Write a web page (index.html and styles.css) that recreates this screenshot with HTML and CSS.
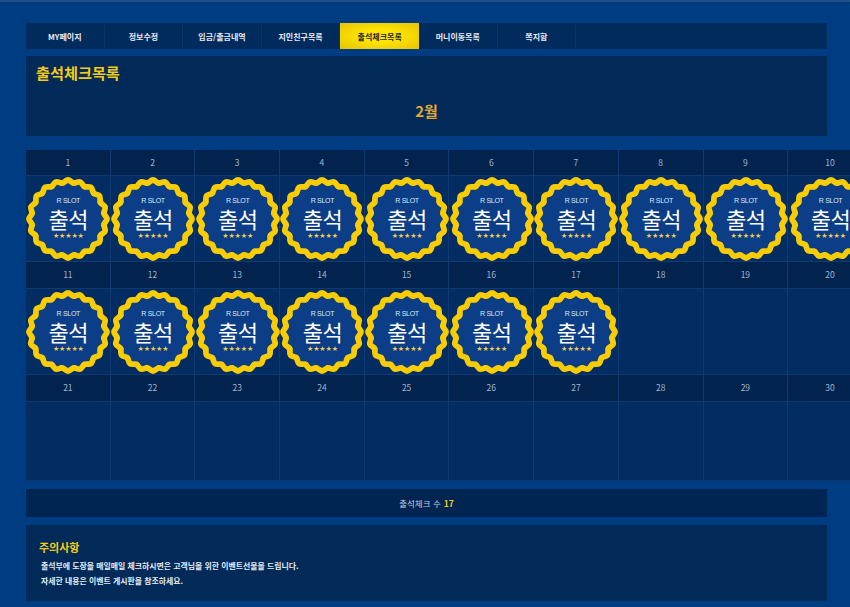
FILE: index.html
```html
<!DOCTYPE html>
<html lang="ko">
<head>
<meta charset="utf-8">
<title>출석체크목록</title>
<link rel="stylesheet" href="styles.css">
</head>
<body>
<svg class="defs" width="0" height="0" aria-hidden="true">
  <defs>
    <path id="lobe" d="M-5.7 -36C-3.4 -36.4 -2.2 -39 0 -39S3.4 -36.4 5.7 -36"/>
    <symbol id="seal" viewBox="-42 -42 84 84">
      <circle r="37" class="seal-fill"/>
      <g class="seal-line">
        <use href="#lobe"/>
        <use href="#lobe" transform="rotate(18)"/>
        <use href="#lobe" transform="rotate(36)"/>
        <use href="#lobe" transform="rotate(54)"/>
        <use href="#lobe" transform="rotate(72)"/>
        <use href="#lobe" transform="rotate(90)"/>
        <use href="#lobe" transform="rotate(108)"/>
        <use href="#lobe" transform="rotate(126)"/>
        <use href="#lobe" transform="rotate(144)"/>
        <use href="#lobe" transform="rotate(162)"/>
        <use href="#lobe" transform="rotate(180)"/>
        <use href="#lobe" transform="rotate(198)"/>
        <use href="#lobe" transform="rotate(216)"/>
        <use href="#lobe" transform="rotate(234)"/>
        <use href="#lobe" transform="rotate(252)"/>
        <use href="#lobe" transform="rotate(270)"/>
        <use href="#lobe" transform="rotate(288)"/>
        <use href="#lobe" transform="rotate(306)"/>
        <use href="#lobe" transform="rotate(324)"/>
        <use href="#lobe" transform="rotate(342)"/>
      </g>
    </symbol>
  </defs>
</svg>
<main class="page">
  <nav class="tabs">
    <a class="tab">MY페이지</a>
    <a class="tab">정보수정</a>
    <a class="tab">입금/출금내역</a>
    <a class="tab">지인친구목록</a>
    <a class="tab tab-active">출석체크목록</a>
    <a class="tab">머니이동목록</a>
    <a class="tab">쪽지함</a>
  </nav>
  <section class="panel">
    <h1 class="panel-title">출석체크목록</h1>
    <p class="month">2월</p>
  </section>
  <section class="calendar">
    <div class="day">1</div><div class="day">2</div><div class="day">3</div><div class="day">4</div><div class="day">5</div><div class="day">6</div><div class="day">7</div><div class="day">8</div><div class="day">9</div><div class="day">10</div>
    <div class="cell"><div class="stamp"><svg class="seal"><use href="#seal"/></svg><div class="stamp-text"><span class="brand">R SLOT</span><span class="word">출석</span><span class="stars">★★★★★</span></div></div></div>
    <div class="cell"><div class="stamp"><svg class="seal"><use href="#seal"/></svg><div class="stamp-text"><span class="brand">R SLOT</span><span class="word">출석</span><span class="stars">★★★★★</span></div></div></div>
    <div class="cell"><div class="stamp"><svg class="seal"><use href="#seal"/></svg><div class="stamp-text"><span class="brand">R SLOT</span><span class="word">출석</span><span class="stars">★★★★★</span></div></div></div>
    <div class="cell"><div class="stamp"><svg class="seal"><use href="#seal"/></svg><div class="stamp-text"><span class="brand">R SLOT</span><span class="word">출석</span><span class="stars">★★★★★</span></div></div></div>
    <div class="cell"><div class="stamp"><svg class="seal"><use href="#seal"/></svg><div class="stamp-text"><span class="brand">R SLOT</span><span class="word">출석</span><span class="stars">★★★★★</span></div></div></div>
    <div class="cell"><div class="stamp"><svg class="seal"><use href="#seal"/></svg><div class="stamp-text"><span class="brand">R SLOT</span><span class="word">출석</span><span class="stars">★★★★★</span></div></div></div>
    <div class="cell"><div class="stamp"><svg class="seal"><use href="#seal"/></svg><div class="stamp-text"><span class="brand">R SLOT</span><span class="word">출석</span><span class="stars">★★★★★</span></div></div></div>
    <div class="cell"><div class="stamp"><svg class="seal"><use href="#seal"/></svg><div class="stamp-text"><span class="brand">R SLOT</span><span class="word">출석</span><span class="stars">★★★★★</span></div></div></div>
    <div class="cell"><div class="stamp"><svg class="seal"><use href="#seal"/></svg><div class="stamp-text"><span class="brand">R SLOT</span><span class="word">출석</span><span class="stars">★★★★★</span></div></div></div>
    <div class="cell"><div class="stamp"><svg class="seal"><use href="#seal"/></svg><div class="stamp-text"><span class="brand">R SLOT</span><span class="word">출석</span><span class="stars">★★★★★</span></div></div></div>
    <div class="day">11</div><div class="day">12</div><div class="day">13</div><div class="day">14</div><div class="day">15</div><div class="day">16</div><div class="day">17</div><div class="day">18</div><div class="day">19</div><div class="day">20</div>
    <div class="cell"><div class="stamp"><svg class="seal"><use href="#seal"/></svg><div class="stamp-text"><span class="brand">R SLOT</span><span class="word">출석</span><span class="stars">★★★★★</span></div></div></div>
    <div class="cell"><div class="stamp"><svg class="seal"><use href="#seal"/></svg><div class="stamp-text"><span class="brand">R SLOT</span><span class="word">출석</span><span class="stars">★★★★★</span></div></div></div>
    <div class="cell"><div class="stamp"><svg class="seal"><use href="#seal"/></svg><div class="stamp-text"><span class="brand">R SLOT</span><span class="word">출석</span><span class="stars">★★★★★</span></div></div></div>
    <div class="cell"><div class="stamp"><svg class="seal"><use href="#seal"/></svg><div class="stamp-text"><span class="brand">R SLOT</span><span class="word">출석</span><span class="stars">★★★★★</span></div></div></div>
    <div class="cell"><div class="stamp"><svg class="seal"><use href="#seal"/></svg><div class="stamp-text"><span class="brand">R SLOT</span><span class="word">출석</span><span class="stars">★★★★★</span></div></div></div>
    <div class="cell"><div class="stamp"><svg class="seal"><use href="#seal"/></svg><div class="stamp-text"><span class="brand">R SLOT</span><span class="word">출석</span><span class="stars">★★★★★</span></div></div></div>
    <div class="cell"><div class="stamp"><svg class="seal"><use href="#seal"/></svg><div class="stamp-text"><span class="brand">R SLOT</span><span class="word">출석</span><span class="stars">★★★★★</span></div></div></div>
    <div class="cell"></div><div class="cell"></div><div class="cell"></div>
    <div class="day">21</div><div class="day">22</div><div class="day">23</div><div class="day">24</div><div class="day">25</div><div class="day">26</div><div class="day">27</div><div class="day">28</div><div class="day">29</div><div class="day">30</div>
    <div class="cell"></div><div class="cell"></div><div class="cell"></div><div class="cell"></div><div class="cell"></div><div class="cell"></div><div class="cell"></div><div class="cell"></div><div class="cell"></div><div class="cell"></div>
  </section>
  <section class="summary">출석체크 수 <b class="count">17</b></section>
  <section class="notice">
    <h2 class="notice-title">주의사항</h2>
    <p class="notice-line">출석부에 도장을 매일매일 체크하시면은 고객님을 위한 이벤트선물을 드립니다.</p>
    <p class="notice-line">자세한 내용은 이벤트 게시판을 참조하세요.</p>
  </section>
</main>
</body>
</html>
```
FILE: styles.css
```css
* { box-sizing: border-box; }
html, body { margin: 0; height: 607px; overflow: hidden; }
body {
  background: #003c82;
  border-top: 2px solid #24507f;
  font-family: "Noto Sans CJK KR", "Noto Sans", sans-serif;
  color: #fff;
}
.defs { display: block; height: 0; }
.page { width: 850px; padding: 21px 23px 0 26px; }

.tabs { display: flex; height: 26px; background: #012b5c; }
.tab {
  width: 78.6px;
  display: flex;
  align-items: center;
  justify-content: center;
  font-size: 8px;
  font-weight: 700;
  color: #e6ecf4;
  border-right: 1px solid #07356a;
}
.tab-active {
  background: radial-gradient(ellipse at center, #ffe600 30%, #e6c208 100%);
  color: #1c2430;
  border-right: 0;
}

.panel { height: 80px; margin-top: 7px; background: #012a58; padding: 5px 10px 0; }
.panel-title { margin: 0; font-size: 15.2px; line-height: 22px; font-weight: 700; color: #f3cb16; }
.month { margin: 17px 0 0; text-align: center; font-size: 15px; line-height: 22px; font-weight: 700; color: #e2a932; }

.calendar {
  display: grid;
  grid-template-columns: repeat(10, 84.7px);
  grid-template-rows: 26px 86px 27px 86px 27px 79px;
  width: 847px;
  margin-top: 14px;
}
.day {
  display: flex;
  align-items: center;
  justify-content: center;
  padding-bottom: 2px;
  font-size: 8.5px;
  color: #9fb5d0;
  background: #02234d;
  border-right: 1px solid #0d3a70;
  border-bottom: 1px solid #0d3a70;
}
.cell {
  background: #032d62;
  border-right: 1px solid #0d3a70;
  border-bottom: 1px solid #0d3a70;
  display: flex;
  align-items: center;
  justify-content: center;
}
.stamp { display: grid; width: 84px; height: 84px; margin-right: -1px; flex: none; }
.seal, .stamp-text { grid-area: 1 / 1; }
.seal { width: 84px; height: 84px; }
.seal-fill { fill: #0b3e86; }
.seal-line { fill: none; stroke: #f8cd05; stroke-width: 5.8; stroke-linecap: round; stroke-linejoin: round; }
.stamp-text {
  display: flex;
  flex-direction: column;
  align-items: center;
  padding-top: 19px;
}
.brand { font-family: "Liberation Sans", sans-serif; font-size: 7px; line-height: 9px; letter-spacing: -0.3px; color: #dfe7f2; }
.word { font-size: 22px; line-height: 25px; color: #fff; margin-top: 1px; letter-spacing: -0.5px; }
.stars { font-family: "DejaVu Sans", sans-serif; font-size: 7px; line-height: 8px; color: #f2cb52; letter-spacing: -0.1px; margin-top: 1px; }

.summary {
  height: 28px;
  margin-top: 8px;
  background: #012552;
  display: flex;
  align-items: center;
  justify-content: center;
  gap: 3px;
  font-size: 8.5px;
  color: #c3d0e0;
}
.count { color: #f3cb16; font-weight: 700; }

.notice { height: 76px; margin-top: 8px; background: #012a58; padding: 14px 13px 0; }
.notice-title { margin: 0 0 4px; font-size: 11px; line-height: 16px; font-weight: 700; color: #f3cb16; }
.notice-line { margin: 0 0 0 2px; font-size: 7.9px; line-height: 14.5px; font-weight: 700; color: #e6ecf4; }
```
